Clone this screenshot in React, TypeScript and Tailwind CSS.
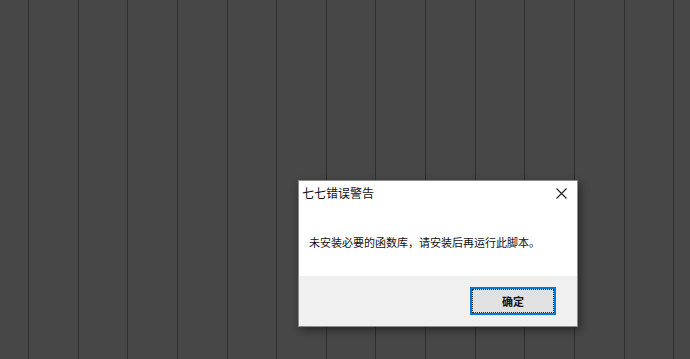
import React from "react";

export default function App() {
  const cols = Array.from({ length: 14 });
  return (
    <div className="relative w-[690px] h-[359px] overflow-hidden bg-[#474747]" style={{ fontFamily: '"Noto Sans CJK SC", "Noto Sans", sans-serif' }}>
      <div className="flex h-full pl-[28px]">
        {cols.map((_, i) => (
          <div key={i} className="shrink-0 w-[49.65px] h-full border-l border-[#2f2f2f]" />
        ))}
      </div>

      <div className="absolute left-[298px] top-[180px] w-[280px] h-[147px] flex flex-col bg-white border border-[#8c8c8c] shadow-[2px_3px_8px_rgba(0,0,0,0.45)]">
        <div className="flex items-center justify-between h-[24px] pl-[3px] shrink-0">
          <span className="text-[12px] leading-none text-[#111]">七七错误警告</span>
          <div className="w-[31px] h-[24px] flex items-center justify-center">
            <svg width="11" height="11" viewBox="0 0 11 11" fill="none" stroke="#222" strokeWidth="1.1">
              <path d="M0.5 0.5 L10.5 10.5 M10.5 0.5 L0.5 10.5" />
            </svg>
          </div>
        </div>
        <div className="flex-1 flex items-center pl-[10px] pt-[3px]">
          <span className="text-[11px] leading-none text-[#111]">未安装必要的函数库，请安装后再运行此脚本。</span>
        </div>
        <div className="h-[50px] shrink-0 bg-[#f0f0f0] flex justify-end items-start pt-[11px] pr-[21px]">
          <div className="w-[86px] h-[28px] border-2 border-[#0078d7] bg-[#e1e1e1] flex items-center justify-center outline-1 outline-dotted outline-[#222] -outline-offset-3">
            <span className="text-[11px] leading-none text-[#111] font-bold">确定</span>
          </div>
        </div>
      </div>
    </div>
  );
}
